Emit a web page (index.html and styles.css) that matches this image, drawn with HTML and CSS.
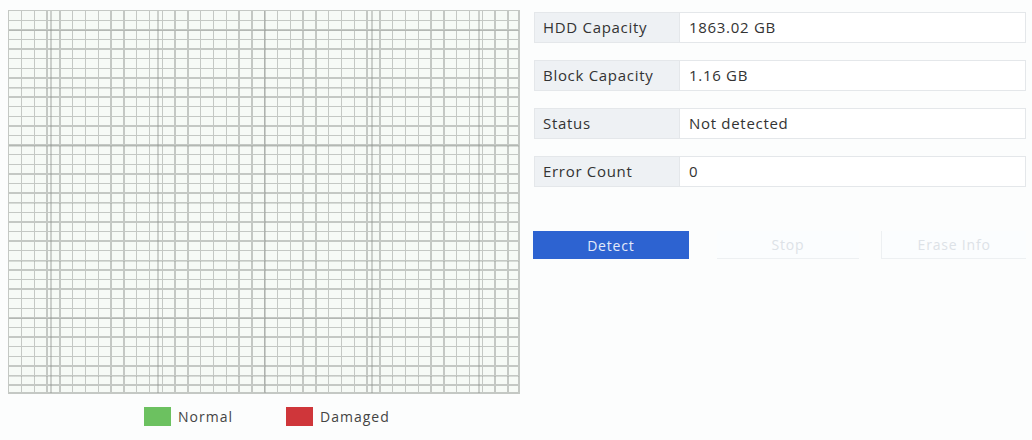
FILE: index.html
```html
<!DOCTYPE html>
<html>
<head>
<meta charset="utf-8">
<link rel="stylesheet" href="styles.css">
</head>
<body>
<div class="page">
  <div class="left">
    <div class="grid"></div>
    <div class="legend">
      <span class="swatch normal"></span><span class="legend-label">Normal</span>
      <span class="swatch damaged"></span><span class="legend-label">Damaged</span>
    </div>
  </div>
  <div class="right">
    <div class="info-row"><div class="info-label">HDD Capacity</div><div class="info-value">1863.02 GB</div></div>
    <div class="info-row"><div class="info-label">Block Capacity</div><div class="info-value">1.16 GB</div></div>
    <div class="info-row"><div class="info-label">Status</div><div class="info-value">Not detected</div></div>
    <div class="info-row"><div class="info-label">Error Count</div><div class="info-value">0</div></div>
    <div class="buttons">
      <button class="btn btn-primary">Detect</button>
      <button class="btn btn-disabled btn-stop">Stop</button>
      <button class="btn btn-disabled btn-erase">Erase Info</button>
    </div>
  </div>
</div>
</body>
</html>
```

FILE: styles.css
```css
html, body {
  margin: 0;
  padding: 0;
  background: #fcfdfd;
  font-family: "Open Sans", "DejaVu Sans", sans-serif;
  color: #333;
}
.page {
  display: flex;
  padding: 10px 0 0 8px;
  width: 1032px;
  height: 440px;
  box-sizing: border-box;
}
.left {
  width: 512px;
  display: flex;
  flex-direction: column;
}
.grid {
  width: 512px;
  height: 384px;
  box-sizing: border-box;
  border: 1px solid #c4c8c4;
  background-color: #f6faf6;
  background-image:
    repeating-linear-gradient(to right, transparent 0 42.4px, rgba(140,145,140,0.4) 42.4px 43.6px, transparent 43.6px 107px),
    repeating-linear-gradient(to bottom, transparent 0 20.2px, rgba(140,145,140,0.3) 20.2px 21.4px, transparent 21.4px 57.6px),
    repeating-linear-gradient(to right, #c4c8c4 0 1.4px, transparent 1.4px 12.8px),
    repeating-linear-gradient(to bottom, #c4c8c4 0 1.3px, transparent 1.3px 9.6px);
  background-position: -1px -1px;
}
.legend {
  display: flex;
  align-items: center;
  margin-top: 13px;
  padding-left: 136px;
  font-size: 14px;
  color: #444;
}
.swatch {
  width: 27px;
  height: 19px;
  display: inline-block;
}
.swatch.normal { background: #6cc160; }
.swatch.damaged { background: #cf363a; }
.legend-label {
  margin-left: 7px;
  width: 108px;
  letter-spacing: 1px;
}
.right {
  margin-left: 14px;
  width: 492px;
  padding-top: 2px;
}
.info-row {
  display: flex;
  height: 31px;
  margin-bottom: 17px;
  border: 1px solid #e4e7ea;
  box-sizing: border-box;
  font-size: 15px;
  letter-spacing: 0.7px;
}
.info-label {
  width: 145px;
  background: #eef1f4;
  border-right: 1px solid #e4e7ea;
  padding-left: 8px;
  line-height: 29px;
  box-sizing: border-box;
  color: #333;
}
.info-value {
  flex: 1;
  background: #fff;
  padding-left: 9px;
  line-height: 29px;
  color: #333;
}
.buttons {
  display: flex;
  margin-top: 44px;
  margin-left: -1px;
}
.btn {
  height: 28px;
  font-family: inherit;
  font-size: 14px;
  border: none;
  padding: 0;
  letter-spacing: 0.8px;
}
.btn-primary {
  width: 156px;
  background: #2d63d1;
  color: #e3eafa;
}
.btn-disabled {
  background: #fbfdfe;
  color: #dde2e7;
  border-bottom: 1px solid #edf0f2;
}
.btn-stop {
  width: 143px;
  margin-left: 28px;
}
.btn-erase {
  width: 145px;
  margin-left: 22px;
  border-left: 1px solid #edf0f2;
}
```
